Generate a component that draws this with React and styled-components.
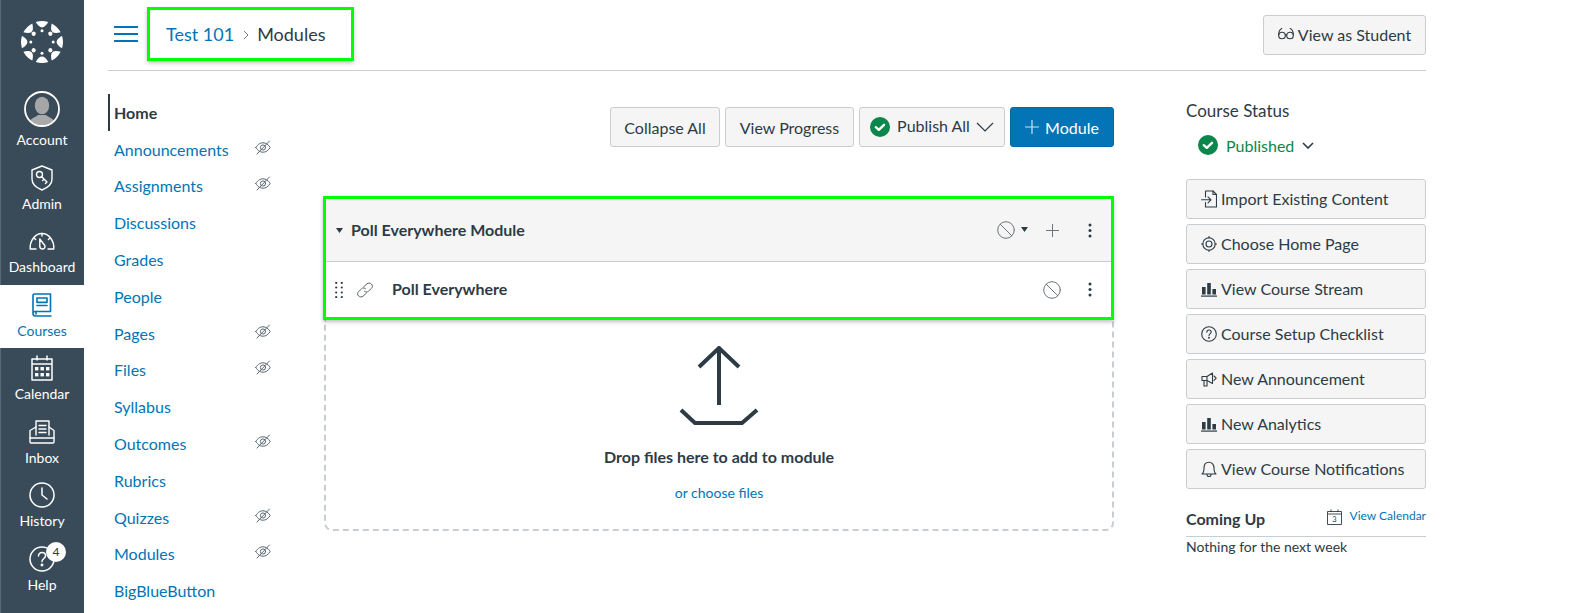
import React from 'react';
import styled, { createGlobalStyle } from 'styled-components';

const GlobalStyle = createGlobalStyle`
	html, body {
		margin: 0;
		height: 100%;
		overflow: hidden;
		background: #fff;
		font-family: Lato, 'Open Sans', sans-serif;
		color: #2d3b45;
	}
	* { box-sizing: border-box; }
`;

const SIDE = '#394b58';
const BLUE = '#0374b5';
const GREEN = '#0b874b';
const LINE = '#c7cdd1';

const Line = ({ size = 16, h, vb, color = 'currentColor', sw = 1.2, children }) => (
	<svg width={size} height={h || size} viewBox={vb || `0 0 ${size} ${h || size}`} fill='none' stroke={color} strokeWidth={sw} strokeLinecap='round' strokeLinejoin='round'>
		{children}
	</svg>
);

const CanvasLogo = () => (
	<svg width='44' height='44' viewBox='-22 -22 44 44' fill='#fff'>
		{[0, 45, 90, 135, 180, 225, 270, 315].map(a => (
			<g key={a} transform={`rotate(${a})`}>
				<path d='M-6.3 -20 A21 21 0 0 1 6.3 -20 Q3 -14.6 0 -14.6 Q-3 -14.6 -6.3 -20 Z' />
				<circle cx='0' cy={a % 90 === 0 ? -11.2 : -11.8} r={a % 90 === 0 ? 1.5 : 2.1} />
			</g>
		))}
	</svg>
);

const AccountIcon = () => (
	<svg width='36' height='36' viewBox='0 0 36 36'>
		<defs>
			<clipPath id='avatar'><circle cx='18' cy='18' r='16.5' /></clipPath>
		</defs>
		<g clipPath='url(#avatar)'>
			<ellipse cx='18' cy='14.5' rx='7.2' ry='8.8' fill='#a6a6a6' />
			<path d='M3 36 C3 28 11 27 14 24 L22 24 C25 27 33 28 33 36 Z' fill='#a9a9a9' />
		</g>
		<circle cx='18' cy='18' r='17' fill='none' stroke='#fff' strokeWidth='1.8' />
	</svg>
);

const AdminIcon = () => (
	<Line size={22} h={26} sw={1.4}>
		<path d='M11 1 L21 5 V14 C21 20 16 23 11 25 C6 23 1 20 1 14 V5 Z' />
		<circle cx='8.5' cy='9.5' r='3' />
		<path d='M10.5 11.5 L16 17 L14.4 18.6 M13 14 L11.6 15.4' />
	</Line>
);

const DashboardIcon = () => (
	<Line size={26} h={18} sw={1.4}>
		<path d='M7 17 H1.2 C0.6 9 6 1.5 13 1.5 C20 1.5 25.4 9 24.8 17 H19' />
		<path d='M13 1.5 V4 M5 6 L6.6 7.6 M21 6 L19.4 7.6' />
		<path d='M10.8 7 L15.8 13.5 C16.6 15.6 14.8 17.4 13 17 C11 16.6 10.6 14.8 10.8 13 Z' />
	</Line>
);

const CoursesIcon = () => (
	<Line size={20} h={24} sw={1.6}>
		<path d='M1 20 V2.5 C1 1.6 1.6 1 2.5 1 H18.5 V18.5 H3 C1.8 18.5 1 19.2 1 20.5 C1 22 2 23 3.2 23 H19' />
		<path d='M4 18.5 V21' />
		<rect x='5' y='5' width='10' height='4.4' />
		<path d='M5 12.5 H15' />
	</Line>
);

const CalendarIcon = () => (
	<Line size={22} h={26} sw={1.5}>
		<path d='M1 4 H21 V25 H1 Z M1 9 H21 M6 1 V5 M16 1 V5' />
		<g fill='currentColor' stroke='none'>
			{[4, 9.5, 15].map(x => [12, 18].map(y => <rect key={`${x}-${y}`} x={x} y={y} width='3.4' height='3.4' />))}
		</g>
	</Line>
);

const InboxIcon = () => (
	<Line size={26} h={24} sw={1.4}>
		<path d='M7 15 V1 H20 V15' />
		<path d='M10 5.5 H17 M10 9 H17 M10 12.5 H17' />
		<path d='M7 7 L1 10.5 V22 C1 22.6 1.4 23 2 23 H24 C24.6 23 25 22.6 25 22 V10.5 L20 7' />
		<path d='M1 18 H25' />
	</Line>
);

const HistoryIcon = () => (
	<Line size={26} sw={1.5}>
		<circle cx='13' cy='13' r='12' />
		<path d='M13 6 V13 L18 17' />
	</Line>
);

const HelpIcon = () => (
	<Line size={26} sw={1.5}>
		<circle cx='13' cy='13' r='12' />
		<path d='M9.5 10 C9.5 7.8 11 6.6 13 6.6 C15 6.6 16.5 8 16.5 9.8 C16.5 12.4 13 12.6 13 15.4' />
		<circle cx='13' cy='19' r='0.7' fill='currentColor' />
	</Line>
);

const EyeOff = () => (
	<Line size={16} h={15} color='#5b6770' sw={1}>
		<path d='M0.8 7.5 C3 4 5.4 2.8 8 2.8 C10.6 2.8 13 4 15.2 7.5 C13 11 10.6 12.2 8 12.2 C5.4 12.2 3 11 0.8 7.5 Z' />
		<circle cx='8' cy='7.5' r='2.6' />
		<path d='M2 14 L14.5 1' />
	</Line>
);

const Check = ({ size = 20 }) => (
	<svg width={size} height={size} viewBox='0 0 20 20'>
		<circle cx='10' cy='10' r='10' fill={GREEN} />
		<path d='M5.8 10.2 L8.8 12.8 L14 7.8' fill='none' stroke='#fff' strokeWidth='2.4' strokeLinecap='round' strokeLinejoin='round' />
	</svg>
);

const Ban = () => (
	<Line size={18} color='#6b7780' sw={1}>
		<circle cx='9' cy='9' r='8.3' />
		<path d='M3.2 3.2 L14.8 14.8' />
	</Line>
);

const Kebab = () => (
	<svg width='4' height='15' viewBox='0 0 4 15' fill='#2d3b45'>
		<circle cx='2' cy='2' r='1.5' /><circle cx='2' cy='7.5' r='1.5' /><circle cx='2' cy='13' r='1.5' />
	</svg>
);

const Caret = ({ w = 7, h = 5 }) => (
	<svg width={w} height={h} viewBox='0 0 7 5' fill='#2d3b45'><path d='M0 0 H7 L3.5 5 Z' /></svg>
);

const Grip = () => (
	<svg width='8' height='16' viewBox='0 0 8 16' fill='#2d3b45'>
		{[1, 5.5, 10.5, 15].map(y => [1.2, 6.8].map(x => <circle key={`${x}-${y}`} cx={x} cy={y} r='1.1' />))}
	</svg>
);

const ChainIcon = () => (
	<Line size={18} h={16} color='#5b6770' sw={1}>
		<path d='M7.5 5 L11 1.8 C12.2 0.8 14 0.8 15.4 2 C16.8 3.4 16.8 5 15.6 6.2 L12.2 9.4 C11 10.4 9.4 10.2 8.4 9.2' />
		<path d='M10.5 11 L7 14.2 C5.8 15.2 4 15.2 2.6 14 C1.2 12.6 1.2 11 2.4 9.8 L5.8 6.6 C7 5.6 8.6 5.8 9.6 6.8' />
	</Line>
);

const ImportIcon = () => (
	<Line size={16} h={18} sw={1.1}>
		<path d='M4.5 7 V1 H12 L15.5 4.5 V17 H4.5 V12.5' />
		<path d='M12 1 V4.5 H15.5' />
		<path d='M0.6 9.8 H10 M7 6.8 L10 9.8 L7 12.8' />
	</Line>
);

const TargetIcon = () => (
	<Line size={16} sw={1.1}>
		<circle cx='8' cy='8' r='6.2' /><circle cx='8' cy='8' r='3' />
		<path d='M8 0.5 V2 M8 14 V15.5 M0.5 8 H2 M14 8 H15.5' />
	</Line>
);

const BarsIcon = () => (
	<svg width='16' height='16' viewBox='0 0 16 16' fill='currentColor'>
		<rect x='1' y='6' width='3.6' height='7.5' /><rect x='6.2' y='2' width='3.6' height='11.5' /><rect x='11.4' y='8' width='3.6' height='5.5' />
		<rect x='0' y='14.5' width='16' height='1.2' />
	</svg>
);

const QuestionIcon = () => (
	<Line size={16} sw={1.1}>
		<circle cx='8' cy='8' r='7.3' />
		<path d='M5.8 6.2 C5.8 4.8 6.8 4 8 4 C9.3 4 10.2 4.9 10.2 6 C10.2 7.6 8 7.8 8 9.6' />
		<circle cx='8' cy='11.8' r='0.4' fill='currentColor' />
	</Line>
);

const MegaphoneIcon = () => (
	<Line size={16} sw={1.1}>
		<path d='M1 5.5 H6 L11.5 2 V12.5 L6 9.5 H1 Z M3 9.5 V15 H6 V9.5 M6 5.5 V9.5' />
		<path d='M13 5 L15.2 7.2 L13 9.4' />
	</Line>
);

const BellIcon = () => (
	<Line size={16} sw={1.1}>
		<path d='M1 13 C3 11.5 3 9.5 3 7 C3 3.6 5 1.2 8 1.2 C11 1.2 13 3.6 13 7 C13 9.5 13 11.5 15 13 Z' />
		<path d='M6 13.4 C6 15 7 15.6 8 15.6 C9 15.6 10 15 10 13.4' />
	</Line>
);

const GlassesIcon = () => (
	<Line size={16} h={14} sw={1.1}>
		<circle cx='4' cy='8.5' r='3.3' /><circle cx='12' cy='8.5' r='3.3' />
		<path d='M0.7 8 C0.7 5 1.5 2.5 3.8 1.5 M15.3 8 C15.3 5 14.5 2.5 12.2 1.5 M7.3 8 C7.8 7.5 8.2 7.5 8.7 8' />
	</Line>
);

const SmallCalendar = () => (
	<svg width='15' height='16' viewBox='0 0 15 16' fill='none' stroke='#2d3b45' strokeWidth='0.9'>
		<path d='M0.5 2.5 H14.5 V15.5 H0.5 Z M0.5 5 H14.5 M4 0.5 V3 M11 0.5 V3' />
		<text x='7.5' y='13.4' fontSize='7.5' fontFamily='Lato, sans-serif' fill='#2d3b45' stroke='none' textAnchor='middle'>3</text>
	</svg>
);

const UploadIcon = () => (
	<svg width='84' height='82' viewBox='0 0 84 82' fill='none' stroke='#2d3b45' strokeWidth='4'>
		<path d='M22 21 L42 2 L62 21 M42 3 V59' />
		<path d='M4 64 L18 77 H65 L80 64' />
	</svg>
);

const sideItems = [
	{ label: 'Account', icon: <AccountIcon />, kind: 'account' },
	{ label: 'Admin', icon: <AdminIcon /> },
	{ label: 'Dashboard', icon: <DashboardIcon /> },
	{ label: 'Courses', icon: <CoursesIcon />, active: true },
	{ label: 'Calendar', icon: <CalendarIcon /> },
	{ label: 'Inbox', icon: <InboxIcon /> },
	{ label: 'History', icon: <HistoryIcon /> },
	{ label: 'Help', icon: <HelpIcon />, badge: 4 }
];

const courseNav = [
	{ name: 'Home', current: true },
	{ name: 'Announcements', hidden: true },
	{ name: 'Assignments', hidden: true },
	{ name: 'Discussions' },
	{ name: 'Grades' },
	{ name: 'People' },
	{ name: 'Pages', hidden: true },
	{ name: 'Files', hidden: true },
	{ name: 'Syllabus' },
	{ name: 'Outcomes', hidden: true },
	{ name: 'Rubrics' },
	{ name: 'Quizzes', hidden: true },
	{ name: 'Modules', hidden: true },
	{ name: 'BigBlueButton' }
];

const actions = [
	{ label: 'Import Existing Content', icon: <ImportIcon /> },
	{ label: 'Choose Home Page', icon: <TargetIcon /> },
	{ label: 'View Course Stream', icon: <BarsIcon /> },
	{ label: 'Course Setup Checklist', icon: <QuestionIcon /> },
	{ label: 'New Announcement', icon: <MegaphoneIcon /> },
	{ label: 'New Analytics', icon: <BarsIcon /> },
	{ label: 'View Course Notifications', icon: <BellIcon /> }
];

export default function App() {
	return (
		<Page>
			<GlobalStyle />
			<Sidebar>
				<LogoSlot><CanvasLogo /></LogoSlot>
				{sideItems.map(item => (
					<SideItem key={item.label} $active={item.active} $account={item.kind === 'account'}>
						<SideIcon $account={item.kind === 'account'}>
							{item.icon}
							{item.badge && <Badge>{item.badge}</Badge>}
						</SideIcon>
						<span>{item.label}</span>
					</SideItem>
				))}
			</Sidebar>
			<Main>
				<Header>
					<HeaderLeft>
						<Hamburger><i /><i /><i /></Hamburger>
						<Crumbs>
							<CrumbLink>Test 101</CrumbLink>
							<CrumbSep>
								<svg width='6' height='10' viewBox='0 0 6 10' fill='none' stroke='#6b7780'><path d='M1 1 L5 5 L1 9' /></svg>
							</CrumbSep>
							<span>Modules</span>
						</Crumbs>
					</HeaderLeft>
					<HeaderButton $w='163px'><GlassesIcon />View as Student</HeaderButton>
				</Header>
				<Columns>
					<CourseNav>
						{courseNav.map(item => (
							<NavRow key={item.name} $current={item.current}>
								<span>{item.name}</span>
								{item.hidden && <EyeSlot><EyeOff /></EyeSlot>}
							</NavRow>
						))}
					</CourseNav>
					<Content>
						<Toolbar>
							<Button $w='110px'>Collapse All</Button>
							<Button $w='129px'>View Progress</Button>
							<Button $w='146px'>
								<Check />
								<PublishLabel>Publish All</PublishLabel>
								<PublishChevron>
									<svg width='18' height='10' viewBox='0 0 18 10' fill='none' stroke='#2d3b45' strokeWidth='1.2'><path d='M1 1 L9 9 L17 1' /></svg>
								</PublishChevron>
							</Button>
							<PrimaryButton $w='104px' $primary>
								<svg width='14' height='14' viewBox='0 0 14 14' stroke='#cfe3f0' strokeWidth='1.2'><path d='M7 0 V14 M0 7 H14' /></svg>
								Module
							</PrimaryButton>
						</Toolbar>
						<ModuleBox>
							<ModuleHead>
								<Caret />
								<ModuleTitle>Poll Everywhere Module</ModuleTitle>
								<ModuleTools>
									<Ban />
									<ToolCaret><Caret /></ToolCaret>
									<PlusSlot>
										<svg width='13' height='13' viewBox='0 0 13 13' stroke='#6b7780' strokeWidth='1'><path d='M6.5 0 V13 M0 6.5 H13' /></svg>
									</PlusSlot>
									<Kebab />
								</ModuleTools>
							</ModuleHead>
							<ModuleRow>
								<Grip />
								<ChainSlot><ChainIcon /></ChainSlot>
								<ItemTitle>Poll Everywhere</ItemTitle>
								<RowTools>
									<Ban />
									<Kebab />
								</RowTools>
							</ModuleRow>
						</ModuleBox>
						<DropZone>
							<UploadIcon />
							<DropTitle>Drop files here to add to module</DropTitle>
							<ChooseFiles>or choose files</ChooseFiles>
						</DropZone>
					</Content>
					<Aside>
						<StatusTitle>Course Status</StatusTitle>
						<StatusRow>
							<Check />
							<Published>Published</Published>
							<svg width='12' height='7' viewBox='0 0 12 7' fill='none' stroke='#2d3b45' strokeWidth='1.6'><path d='M1 1 L6 6 L11 1' /></svg>
						</StatusRow>
						<ActionList>
							{actions.map(action => (
								<ActionButton key={action.label}>
									{action.icon}
									<ActionLabel>{action.label}</ActionLabel>
								</ActionButton>
							))}
						</ActionList>
						<ComingHead>
							<ComingTitle>Coming Up</ComingTitle>
							<CalendarLink>
								<SmallCalendar />
								<span>View Calendar</span>
							</CalendarLink>
						</ComingHead>
						<Nothing>Nothing for the next week</Nothing>
					</Aside>
				</Columns>
			</Main>
		</Page>
	);
}

const Page = styled.div`
	display: flex;
	height: 100vh;
	overflow: hidden;
`;

const Sidebar = styled.nav`
	width: 84px;
	flex: none;
	background: ${SIDE};
	color: #fff;
	border-left: 1px solid #5a6a75;
`;

const LogoSlot = styled.div`
	height: 86px;
	display: flex;
	align-items: center;
	justify-content: center;
	padding: 0 1px 2px 0;
`;

const SideItem = styled.div`
	height: ${props => (props.$account ? '72px' : '63.45px')};
	margin-left: -1px;
	padding-top: ${props => (props.$account ? '5px' : '6px')};
	display: flex;
	flex-direction: column;
	align-items: center;
	font-size: 14px;
	line-height: 18px;
	background: ${props => (props.$active ? '#fff' : 'transparent')};
	color: ${props => (props.$active ? BLUE : '#fff')};
`;

const SideIcon = styled.div`
	position: relative;
	height: ${props => (props.$account ? '36px' : '28px')};
	margin-bottom: ${props => (props.$account ? '4px' : '3px')};
	display: flex;
	align-items: center;
	justify-content: center;
`;

const Badge = styled.div`
	position: absolute;
	top: -3px;
	left: 17px;
	width: 20px;
	height: 20px;
	border-radius: 50%;
	background: #fff;
	color: #2d3b45;
	font-size: 12px;
	line-height: 20px;
	text-align: center;
`;

const Main = styled.main`
	width: 1318px;
	margin-left: 24px;
`;

const Header = styled.header`
	height: 71px;
	display: flex;
	align-items: center;
	justify-content: space-between;
	border-bottom: 1px solid ${LINE};
`;

const HeaderLeft = styled.div`
	display: flex;
	align-items: center;
	margin-top: -3px;
	padding-left: 6px;
`;

const Hamburger = styled.div`
	width: 24px;
	display: flex;
	flex-direction: column;
	gap: 5px;
	margin-right: 9px;
	> i {
		display: block;
		height: 2px;
		background: ${BLUE};
	}
`;

const Crumbs = styled.div`
	width: 207px;
	height: 54px;
	display: flex;
	align-items: center;
	padding-left: 16px;
	font-size: 18px;
	border: 3px solid #00ff00;
	box-shadow: 0 2px 4px rgba(0, 0, 0, 0.25);
`;

const CrumbLink = styled.span`
	color: ${BLUE};
`;

const CrumbSep = styled.span`
	display: flex;
	margin: 2px 8px 0 9px;
`;

const Button = styled.div`
	width: ${props => props.$w || 'auto'};
	height: 40px;
	display: flex;
	align-items: center;
	justify-content: center;
	gap: 4px;
	font-size: 16px;
	border-radius: 3px;
	background: ${props => (props.$primary ? BLUE : '#f5f5f5')};
	color: ${props => (props.$primary ? '#fff' : '#2d3b45')};
	border: 1px solid ${props => (props.$primary ? '#0369a4' : LINE)};
`;

const HeaderButton = styled(Button)`
	margin-top: -1px;
	padding-bottom: 1px;
`;

const PrimaryButton = styled(Button)`
	gap: 6px;
`;

const Columns = styled.div`
	display: grid;
	grid-template-columns: 215px 791px 1fr;
`;

const CourseNav = styled.div`
	padding-top: 23px;
`;

const NavRow = styled.div`
	width: 163px;
	height: 36.8px;
	display: flex;
	align-items: center;
	justify-content: space-between;
	padding-left: ${props => (props.$current ? '4px' : '6px')};
	font-size: 16px;
	font-weight: ${props => (props.$current ? 700 : 400)};
	color: ${props => (props.$current ? '#2d3b45' : BLUE)};
	border-left: ${props => (props.$current ? '2px solid #2d3b45' : 'none')};
`;

const EyeSlot = styled.span`
	display: flex;
	margin-top: -4px;
`;

const Content = styled.section`
	padding-top: 36px;
`;

const Toolbar = styled.div`
	display: flex;
	justify-content: flex-end;
	gap: 5px;
`;

const PublishLabel = styled.span`
	margin: -3px 0 0 3px;
`;

const PublishChevron = styled.span`
	display: flex;
	margin-left: 2px;
`;

const ModuleBox = styled.div`
	margin-top: 49px;
	border: 3px solid #00ff00;
	box-shadow: 0 2px 4px rgba(0, 0, 0, 0.25);
	position: relative;
`;

const ModuleHead = styled.div`
	height: 63px;
	display: flex;
	align-items: center;
	padding: 0 19px 0 10px;
	background: #f5f5f5;
	border-bottom: 1px solid ${LINE};
`;

const ModuleTitle = styled.div`
	margin: -2px 0 0 8px;
	font-size: 16px;
	font-weight: 700;
`;

const ModuleTools = styled.div`
	margin-left: auto;
	display: flex;
	align-items: center;
`;

const ToolCaret = styled.span`
	display: flex;
	margin: -2px 0 0 6px;
`;

const PlusSlot = styled.span`
	display: flex;
	margin: 0 29px 0 18px;
`;

const ModuleRow = styled.div`
	height: 55px;
	display: flex;
	align-items: center;
	padding: 0 19px 0 9px;
`;

const ChainSlot = styled.span`
	display: flex;
	margin: 0 18px 0 13px;
`;

const ItemTitle = styled.div`
	font-size: 16px;
	font-weight: 700;
	margin-top: -2px;
`;

const RowTools = styled.div`
	margin-left: auto;
	display: flex;
	align-items: center;
	gap: 27px;
`;

const DropZone = styled.div`
	height: 211px;
	margin-left: 1px;
	padding-top: 26px;
	display: flex;
	flex-direction: column;
	align-items: center;
	border: 2px dashed ${LINE};
	border-top: none;
	border-radius: 0 0 8px 8px;
`;

const DropTitle = styled.div`
	margin-top: 19px;
	font-size: 16px;
	font-weight: 700;
`;

const ChooseFiles = styled.div`
	margin-top: 18px;
	font-size: 14px;
	color: ${BLUE};
`;

const Aside = styled.aside`
	padding: 30px 0 0 72px;
`;

const StatusTitle = styled.div`
	font-size: 17px;
	line-height: 20px;
`;

const StatusRow = styled.div`
	display: flex;
	align-items: center;
	height: 24px;
	margin-top: 12px;
	padding-left: 12px;
`;

const Published = styled.span`
	margin: 0 8px 0 8px;
	font-size: 16px;
	color: ${GREEN};
`;

const ActionList = styled.div`
	margin-top: 22px;
	display: flex;
	flex-direction: column;
	gap: 5px;
`;

const ActionButton = styled(Button)`
	justify-content: flex-start;
	padding-left: 14px;
`;

const ActionLabel = styled.span`
	margin-top: -2px;
`;

const ComingHead = styled.div`
	margin-top: 18px;
	height: 30px;
	display: flex;
	justify-content: space-between;
	border-bottom: 1px solid ${LINE};
`;

const ComingTitle = styled.div`
	font-size: 16px;
	font-weight: 700;
	line-height: 24px;
`;

const CalendarLink = styled.div`
	display: flex;
	align-items: flex-start;
	gap: 8px;
	margin-top: 2px;
	font-size: 12px;
	line-height: 14px;
	color: ${BLUE};
`;

const Nothing = styled.div`
	margin-top: 1px;
	font-size: 14px;
	line-height: 18px;
`;
